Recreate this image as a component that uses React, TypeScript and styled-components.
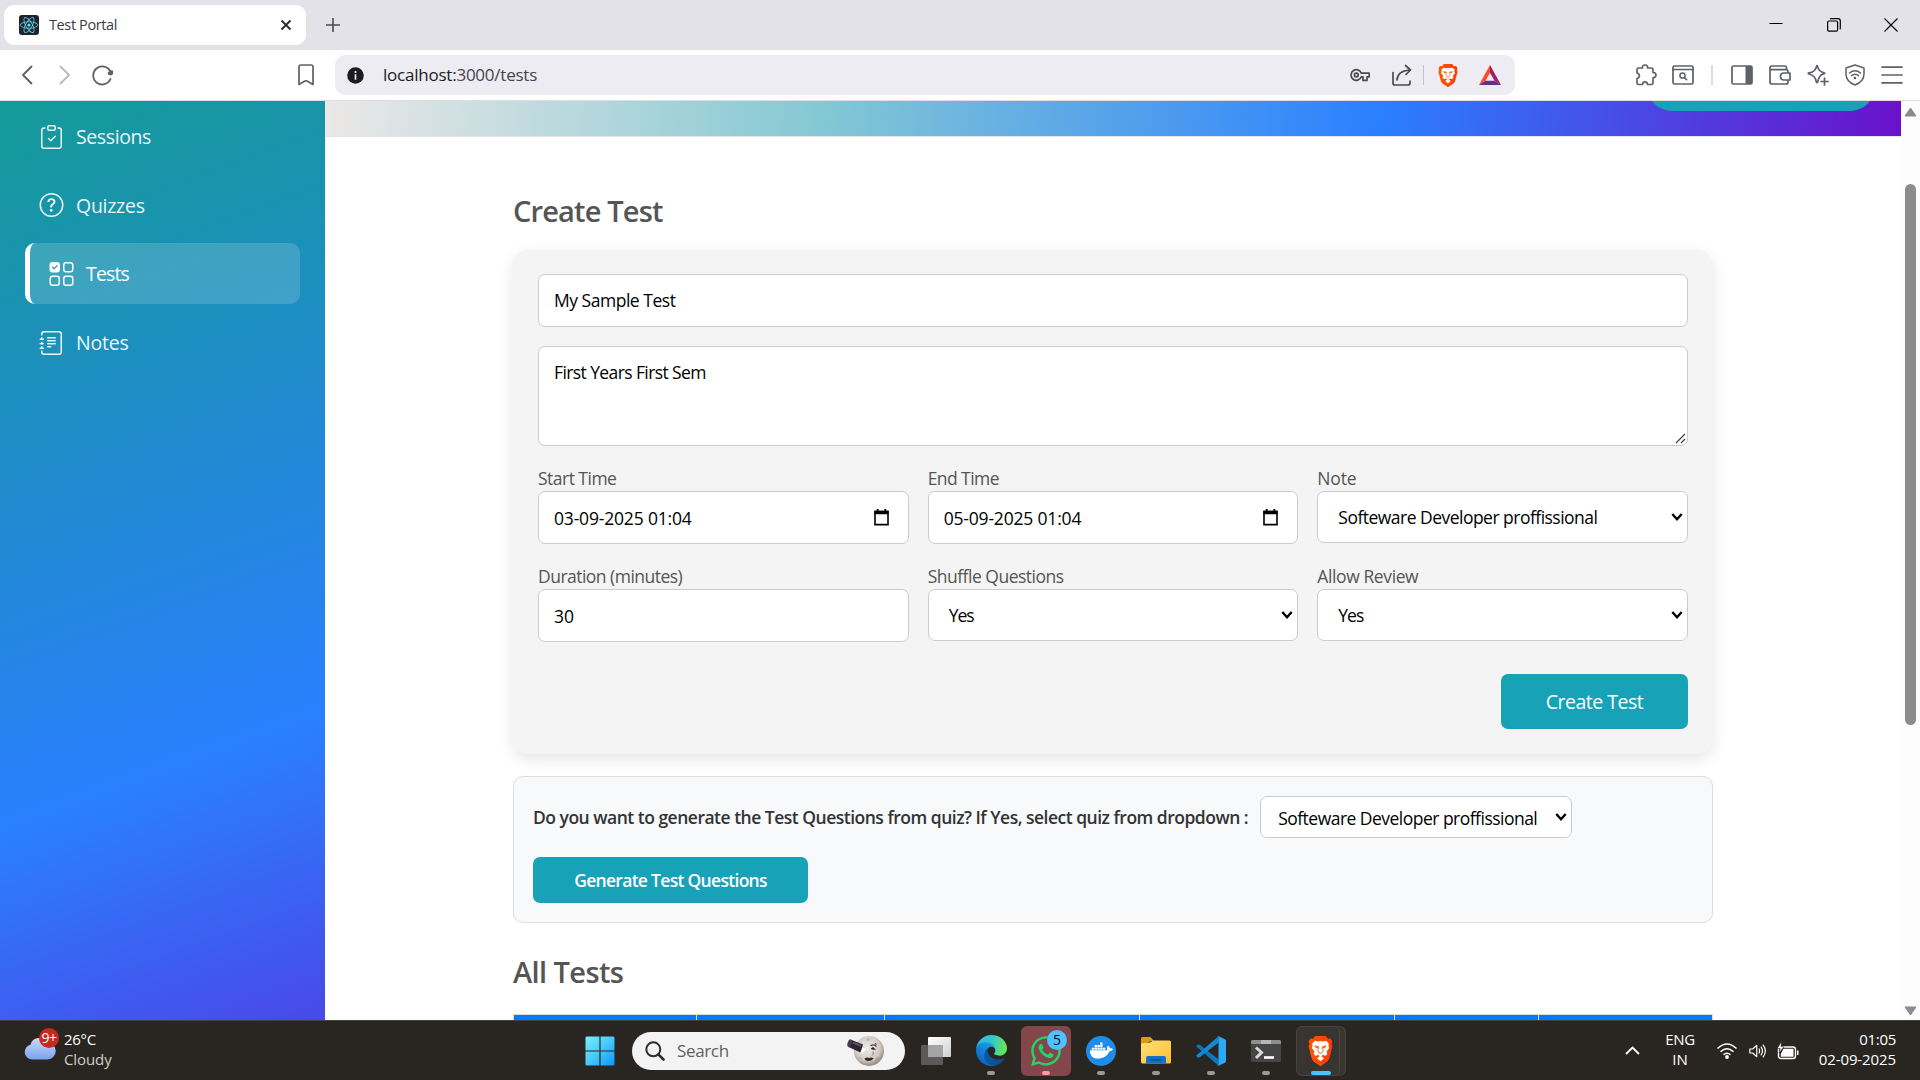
import React from "react";
import styled, { createGlobalStyle } from "styled-components";
import { BsClipboardCheck, BsQuestionCircle, BsUiChecksGrid, BsJournalText } from "react-icons/bs";
import { FaWhatsapp, FaDocker, FaReact } from "react-icons/fa";

const GlobalStyle = createGlobalStyle`
  * { box-sizing: border-box; }
  html, body { margin: 0; overflow: hidden; }
  body { font-family: "Open Sans", "Noto Sans", sans-serif; background: #fff; }
`;

const Screen = styled.div`
  width: 1920px;
  height: 1080px;
  display: flex;
  flex-direction: column;
  overflow: hidden;
`;

const Text = styled.span<{ $ls?: number }>`
  letter-spacing: ${(p) => p.$ls ?? 0}px;
  white-space: nowrap;
`;

/* ---------- browser chrome ---------- */

const TabStrip = styled.div`
  height: 50px;
  flex: none;
  display: flex;
  align-items: center;
  background: #e3e2e8;
  padding-left: 4px;
`;

const Tab = styled.div`
  width: 302px;
  height: 40px;
  border-radius: 10px;
  background: #fff;
  display: flex;
  align-items: center;
  padding: 0 14px 0 15px;
  color: #3b3c42;
  font-size: 14.5px;

  ${Text} { padding-bottom: 2px; }
`;

const Favicon = styled.div`
  width: 20px;
  height: 20px;
  border-radius: 3px;
  background: #20232a;
  color: #61dafb;
  font-size: 18px;
  display: grid;
  place-items: center;
  margin-right: 10px;
`;

const Push = styled.div`
  margin-left: auto;
  display: flex;
  align-items: center;
`;

const NewTab = styled.div`
  width: 53px;
  display: flex;
  justify-content: center;
`;

const WindowButton = styled.div`
  width: 57.5px;
  height: 50px;
  display: grid;
  place-items: center;
`;

const Toolbar = styled.div`
  height: 51px;
  flex: none;
  display: flex;
  align-items: center;
  background: #fff;
  border-bottom: 1px solid #dedde3;
`;

const Cell = styled.div<{ $w: number; $end?: boolean }>`
  width: ${(p) => p.$w}px;
  flex: none;
  display: flex;
  align-items: center;
  justify-content: ${(p) => (p.$end ? "flex-end" : "center")};
`;

const BookmarkCell = styled(Cell)`
  margin-left: 148px;
`;

const MenuCell = styled(Cell)`
  margin-right: 10px;
`;

const AddressBar = styled.div`
  width: 1180px;
  height: 40px;
  border-radius: 10px;
  background: #edecf2;
  display: flex;
  align-items: center;
  color: #44454b;
  font-size: 17px;
  padding-right: 6px;

  > ${Text} { padding: 0 0 2px 8px; }
  b { font-weight: 400; color: #1b1b20; }
`;

const Separator = styled.div<{ $w?: number }>`
  width: ${(p) => p.$w ?? 1}px;
  height: 20px;
  background: ${(p) => (p.$w ? "#dcdbe2" : "#c2c1c8")};
`;

/* ---------- page ---------- */

const Viewport = styled.div`
  height: 919px;
  flex: none;
  display: flex;
  overflow: hidden;
`;

const Sidebar = styled.nav`
  width: 325px;
  flex: none;
  padding: 5px 25px;
  background: linear-gradient(160deg, #159a98 0%, #1993af 18%, #2a7fff 71%, #4949e6 100%);
  color: #e9f6fa;
  font-size: 19.5px;
`;

const NavItem = styled.a<{ $active?: boolean }>`
  display: flex;
  align-items: center;
  gap: 12px;
  height: 61px;
  margin-bottom: 7.7px;
  padding-left: ${(p) => (p.$active ? 19 : 14)}px;
  border-radius: 10px;
  border-left: ${(p) => (p.$active ? "5px solid #fff" : "0")};
  background: ${(p) => (p.$active ? "rgba(255,255,255,.16)" : "transparent")};
  color: ${(p) => (p.$active ? "#fff" : "inherit")};

  svg { width: 25px; height: 24px; }
`;

const Main = styled.main`
  flex: 1;
  display: flex;
  flex-direction: column;
`;

const Banner = styled.header`
  height: 36px;
  flex: none;
  overflow: hidden;
  border-bottom: 1px solid #e6e4ea;
  background: linear-gradient(95deg, #ece8e7 0%, #84c8d3 31.5%, #2a7fff 67%, #4b46e3 84%, #6a11cb 100%);
  display: flex;
  justify-content: flex-end;
  align-items: flex-end;
  padding: 0 26px 25px 0;
`;

const BannerButton = styled.div`
  width: 228px;
  height: 50px;
  flex: none;
  border-radius: 25px;
  background: #17a2b8;
`;

const Content = styled.div`
  width: 1200px;
  margin-left: 188px;
`;

const Heading = styled.h2<{ $top: number; $bottom: number }>`
  margin: 0;
  padding: ${(p) => p.$top}px 0 ${(p) => p.$bottom}px;
  font-size: 29px;
  line-height: 40px;
  font-weight: 600;
  color: #555;
`;

const FormCard = styled.form`
  height: 504px;
  padding: 24px 25px;
  border-radius: 15px;
  background: #f4f4f4;
  box-shadow: 0 5px 15px rgba(0, 0, 0, 0.1);
  font-size: 17.5px;
`;

const Control = styled.div<{ $h: number; $indent?: number; $right?: number; $top?: boolean; $lift?: number }>`
  display: flex;
  justify-content: space-between;
  align-items: ${(p) => (p.$top ? "flex-start" : "center")};
  height: ${(p) => p.$h}px;
  padding: ${(p) => (p.$top ? "13px" : "0")} ${(p) => p.$right ?? 4}px ${(p) => p.$lift ?? 0}px ${(p) => p.$indent ?? 15}px;
  border: 1px solid #ccc;
  border-radius: 7px;
  background: #fff;
  color: #000;
  line-height: 24px;
`;

const TextArea = styled(Control)`
  margin: 19px 0 20px;
  position: relative;
`;

const ResizeGrip = styled.svg`
  position: absolute;
  right: 1px;
  bottom: 1px;
`;

const Fields = styled.div`
  display: grid;
  grid-template-columns: repeat(3, 1fr);
  column-gap: 19px;
  row-gap: 21px;
`;

const Field = styled.label`
  height: 77px;
  color: #555;
  line-height: 25px;

  > ${Text} { display: block; }
`;

const Actions = styled.div`
  display: flex;
  justify-content: flex-end;
  padding-top: 33px;
`;

const Button = styled.button<{ $w: number; $h: number; $size: number; $weight: number }>`
  width: ${(p) => p.$w}px;
  height: ${(p) => p.$h}px;
  padding: 0;
  border: 0;
  border-radius: 7px;
  background: #17a2b8;
  color: #fff;
  font-family: inherit;
  font-size: ${(p) => p.$size}px;
  font-weight: ${(p) => p.$weight};
`;

const GenerateCard = styled.section`
  height: 147px;
  margin-top: 22px;
  padding: 19px;
  border: 1px solid #ddd;
  border-radius: 10px;
  background: #f8f9fb;
  font-size: 17.5px;
`;

const Question = styled.div`
  display: flex;
  align-items: center;
  gap: 12px;
  margin-bottom: 19px;
  font-weight: 600;
  color: #333;

  ${Control} { width: 312px; font-weight: 400; }
  ${Control} ${Text} { padding-top: 1px; }
`;

const Table = styled.div`
  display: grid;
  grid-template-columns: 183px 188px 255px 255px 144px 1fr;
  height: 40px;
  border-top: 1px solid #ddd;
  border-left: 1px solid #ddd;
`;

const HeadCell = styled.div`
  background: #007bff;
  border-right: 1px solid #ddd;
`;

const ScrollTrack = styled.div`
  width: 19px;
  flex: none;
  display: flex;
  flex-direction: column;
  align-items: center;
  background: #fcfcfc;
  padding: 6px 1px 4px 0;
`;

const ScrollThumb = styled.div`
  width: 11px;
  height: 541px;
  margin: 67px 0 auto;
  border-radius: 6px;
  background: #8b8b8b;
`;

/* ---------- taskbar ---------- */

const Taskbar = styled.footer`
  height: 60px;
  flex: none;
  display: flex;
  align-items: center;
  background: #292520;
  border-top: 1px solid #45413c;
  color: #fff;
  font-size: 15px;
`;

const Weather = styled.div`
  width: 575px;
  display: flex;
  align-items: center;
  padding-left: 24px;
`;

const WeatherIcon = styled.div`
  position: relative;
  width: 40px;
  height: 60px;
  padding-top: 15px;
`;

const AlertBadge = styled.div`
  position: absolute;
  left: 15px;
  top: 7px;
  width: 20px;
  height: 20px;
  border-radius: 50%;
  background: #c42b1c;
  text-align: center;
  font-size: 14px;
  line-height: 19px;
  letter-spacing: -0.5px;
`;

const Stack = styled.div<{ $align?: string }>`
  display: flex;
  flex-direction: column;
  align-items: ${(p) => p.$align ?? "flex-start"};
  line-height: 20px;
  padding-bottom: 4px;
`;

const Muted = styled(Text)`
  color: #cfcdcb;
`;

const Apps = styled.div`
  display: flex;
  align-items: center;
  gap: 5px;
`;

const AppCell = styled.div<{ $bg?: string }>`
  position: relative;
  width: 50px;
  height: 50px;
  border-radius: 6px;
  background: ${(p) => p.$bg ?? "transparent"};
  display: flex;
  align-items: center;
  justify-content: center;
`;

const Indicator = styled.i<{ $c?: string; $w?: number }>`
  position: absolute;
  bottom: 1px;
  left: ${(p) => 25 - (p.$w ?? 8) / 2}px;
  width: ${(p) => p.$w ?? 8}px;
  height: 4px;
  border-radius: 2px;
  background: ${(p) => p.$c ?? "#9b9896"};
`;

const CountBadge = styled.div`
  position: absolute;
  right: 4px;
  top: 4px;
  width: 20px;
  height: 20px;
  border-radius: 50%;
  background: #4cc2ff;
  color: #111;
  font-size: 14px;
  line-height: 20px;
  text-align: center;
`;

const BraveCell = styled(AppCell)`
  width: 44px;
  padding-left: 5px;
  background: #383430;
  border: 1px solid #48443f;
  box-shadow: 5px 0 0 -0.5px #38342f, 6px 0 0 0 #45413c;
`;

const BraveIndicator = styled(Indicator)`
  left: 14px;
  bottom: 0;
`;

const SearchBox = styled.div`
  width: 273px;
  height: 38px;
  margin: 0 1px 0 2px;
  border-radius: 19px;
  background: #f3f3f3;
  display: flex;
  align-items: center;
  padding: 0 20px 0 13px;
  color: #5f5f5f;
  font-size: 17px;
`;

const SearchLabel = styled(Text)`
  margin: 0 auto 1px 12px;
`;

const DockerDisc = styled.div`
  width: 30px;
  height: 30px;
  border-radius: 50%;
  background: #1d8ceb;
  display: grid;
  place-items: center;
  font-size: 23px;
`;

const Tray = styled.div`
  margin-left: auto;
  padding-right: 24px;
  display: flex;
  align-items: center;
`;

/* ---------- drawings ---------- */

const stroke = { fill: "none", stroke: "#5f6168", strokeWidth: 1.7, strokeLinejoin: "round", strokeLinecap: "round" } as const;

const Chevron = () => (
  <svg width="12" height="10" viewBox="0 0 12 10"><path d="M1.3 2 6 7.2 10.7 2" fill="none" stroke="#000" strokeWidth="2.4" /></svg>
);

const Calendar = () => (
  <svg width="15" height="17" viewBox="0 0 15 17">
    <path d="M1 2.6h13v13H1z" fill="none" stroke="#000" strokeWidth="1.6" />
    <path d="M.4 1.8h14.2v3.400H.4zM2.8 0h1.8v3H2.8zM10.4 0h1.8v3h-1.8z" />
  </svg>
);

const BraveLion = ({ w, h }: { w: number; h: number }) => (
  <svg width={w} height={h} viewBox="0 0 24 28" preserveAspectRatio="none">
    <defs>
      <linearGradient id="lion" x1="0" x2="1"><stop stopColor="#ff5601" /><stop offset="1" stopColor="#ff3a08" /></linearGradient>
    </defs>
    <path d="M17 0 19.2 2.6 21.6 2.4 23.4 5 22.6 7.4 23.4 9.6 20.6 20.6Q20 22.6 18.2 24L12.8 27.7Q12 28.2 11.2 27.7L5.8 24Q4 22.6 3.4 20.6L.6 9.6 1.4 7.4.6 5 2.4 2.4 4.8 2.6 7 0z" fill="url(#lion)" />
    <path d="M4 7.2 6.5 4.5 9.8 5.2 12 4.6 14.2 5.2 17.5 4.5 20 7.2 19.6 9 20.4 11.2 17.8 14.4 18.6 16.4 16.8 18.6 14.4 17.6 12.9 19 15.4 20.8 12 23.6 8.6 20.8 11.1 19 9.6 17.6 7.2 18.6 5.4 16.4 6.2 14.4 3.6 11.2 4.4 9z" fill="#fff" />
    <path d="M6.4 9.200 10.200 9.900 10.400 11.400 9.400 13.200 10.600 15.600M17.600 9.200 13.800 9.900 13.600 11.400 14.600 13.200 13.400 15.600M10.600 15.600 12 16.300 13.400 15.600" fill="none" stroke="#ff4d04" strokeWidth=".8" />
    <path d="M6.200 9.400 9.600 10.300 9.200 11.600 7.600 11zM17.800 9.400 14.400 10.300 14.800 11.600 16.400 11z" fill="#ff4d04" />
  </svg>
);

const WindowsLogo = () => (
  <svg width="30" height="30" viewBox="0 0 30 30">
    <defs>
      <linearGradient id="win" x1="0" y1="0" x2="30" y2="30" gradientUnits="userSpaceOnUse">
        <stop stopColor="#7cf3ff" /><stop offset=".5" stopColor="#46c8fb" /><stop offset="1" stopColor="#0a93fb" />
      </linearGradient>
    </defs>
    <path d="M1.5.5H14.4V14.4H.5V1.5zM15.6.5H28.5l1 1V14.4H15.6zM.5 15.6H14.4V29.5H1.5l-1-1zM15.6 15.6H29.5V28.5l-1 1H15.6z" fill="url(#win)" />
  </svg>
);

const Edge = () => (
  <svg width="31" height="31" viewBox="0 0 256 256">
    <defs>
      <linearGradient id="e1" x1="60" y1="177" x2="236" y2="177" gradientUnits="userSpaceOnUse"><stop stopColor="#0c59a4" /><stop offset="1" stopColor="#114a8b" /></linearGradient>
      <linearGradient id="e2" x1="150" y1="90" x2="45" y2="220" gradientUnits="userSpaceOnUse"><stop stopColor="#1b9de2" /><stop offset=".5" stopColor="#0f85d8" /><stop offset="1" stopColor="#0669c4" /></linearGradient>
      <linearGradient id="e3" x1="10" y1="60" x2="250" y2="110" gradientUnits="userSpaceOnUse"><stop stopColor="#2fb5e8" /><stop offset=".5" stopColor="#36c6c9" /><stop offset="1" stopColor="#66eb4f" /></linearGradient>
    </defs>
    <path d="M231 190.500c-3.400 1.800-6.900 3.400-10.500 4.700a101 101 0 0 1-35.900 6.500c-47.300 0-88.500-32.500-88.500-74.300a31.500 31.500 0 0 1 16.400-27.300c-42.800 1.800-53.800 46.400-53.800 72.500 0 73.900 68.100 81.400 82.800 81.400 7.900 0 19.800-2.300 27-4.600l1.300-.4a128 128 0 0 0 66.600-52.800 4 4 0 0 0-5.400-5.700z" fill="url(#e1)" />
    <path d="M105.700 241.400a79 79 0 0 1-22.700-21.300 80.700 80.700 0 0 1 29.500-120c3.200-1.500 8.500-4.100 15.600-4a32.400 32.400 0 0 1 25.700 13 31.900 31.900 0 0 1 6.300 18.700c0-.2 24.500-79.600-80-79.600-43.900 0-80 41.700-80 78.200a130 130 0 0 0 12.100 56 128 128 0 0 0 156.400 67 75.500 75.500 0 0 1-62.800-8z" fill="url(#e2)" />
    <path d="M152.300 148.900c-.9 1-3.400 2.500-3.400 5.600 0 2.600 1.700 5.200 4.800 7.300 14.300 10 41.400 8.600 41.500 8.600a59.600 59.600 0 0 0 30.300-8.300 61.400 61.400 0 0 0 30.400-52.900c.3-22.400-8-37.300-11.300-43.900C223.500 23.900 177.700 0 128 0A128 128 0 0 0 0 126.200c.5-36.500 36.800-66 80-66 3.500 0 23.500.3 42 10a72.600 72.600 0 0 1 30.900 29.300c6.100 10.600 7.200 24.100 7.200 29.500s-2.700 13.300-7.800 19.900z" fill="url(#e3)" />
  </svg>
);

const Folder = () => (
  <svg width="30" height="27" viewBox="0 0 30 27">
    <defs><linearGradient id="fo" x1="0" y1="0" x2="1" y2="1"><stop stopColor="#ffe27a" /><stop offset="1" stopColor="#fdbd2c" /></linearGradient></defs>
    <path d="M0 1.500Q0 0 1.500 0h8l3.500 4h-3L0 9z" fill="#dc9c12" />
    <path d="M0 6.500 9 5.500l3-2h16.500Q30 3.500 30 5v20.500q0 1-1.500 1h-27Q0 26.500 0 25z" fill="url(#fo)" />
    <path d="M5 26.500V21q0-2 2-2h16q2 0 2 2v5.500z" fill="#1173c7" />
    <path d="M9.500 22.800h11" stroke="#0b4f91" strokeWidth="1.500" />
  </svg>
);

const VSCode = () => (
  <svg width="30" height="30" viewBox="0 0 30 30">
    <path d="M0 10.300 2 8.600Q2.600 8.200 3.300 8.600L22.500 23.300V29.700z" fill="#0b76bd" />
    <path d="M0 19.700 2 21.400q.6.400 1.300 0L22.500 6.700V.300z" fill="#1686cf" />
    <path d="M21 .500Q21.600 0 22.500.300L29 3.200q1 .500 1 1.500v20.600q0 1-1 1.500l-6.500 2.900Q21.600 30 21 29.500q1.500.500 1.500-1.500V2q0-2-1.500-1.500z" fill="#2aaaf2" />
  </svg>
);

const Terminal = () => (
  <svg width="30" height="22" viewBox="0 0 30 22">
    <rect width="30" height="22" rx="1.500" fill="#454545" />
    <path d="M0 4V1.500Q0 0 1.500 0h27Q30 0 30 1.500V4z" fill="#8e8e8e" />
    <path d="M10 0h10v4H10z" fill="#b5b5b5" />
    <path d="m5 7.500 5.500 5L5 18" fill="none" stroke="#d9d9d9" strokeWidth="3" />
    <path d="M13 17.500h10" stroke="#fff" strokeWidth="2.600" />
  </svg>
);

const Moon = () => (
  <svg width="38" height="32" viewBox="0 0 38 32">
    <defs><radialGradient id="mo" cx=".45" cy=".4" r=".6"><stop stopColor="#efede9" /><stop offset=".7" stopColor="#cfcac3" /><stop offset="1" stopColor="#91877c" /></radialGradient></defs>
    <circle cx="22" cy="16" r="15" fill="url(#mo)" />
    <circle cx="21" cy="4.500" r="1.600" fill="#bdb7af" /><circle cx="13" cy="24" r="2" fill="#bdb7af" /><circle cx="30" cy="24" r="1.600" fill="#aaa299" />
    <path d="M9 10.500 19 14 14 19z" fill="#fff" />
    <path d="M3.500 4.500 16 9.500 13.500 17.500 1.500 12z" fill="#2c2430" />
    <ellipse cx="2.600" cy="8.200" rx="2" ry="4" transform="rotate(18 2.600 8.200)" fill="#4a3d4c" />
    <path d="M6 7.500 14 11" stroke="#6b5b68" strokeWidth="1.400" />
    <path d="M23.500 11q3-2.500 6 .5M24 14q2.500-1.500 4.500 1M28 8.500l1.500 1" fill="none" stroke="#4b4140" strokeWidth="1.200" />
    <circle cx="26" cy="13.500" r="1.200" fill="#2b2426" />
    <path d="M17.500 23.500q3-1.500 4.500-.5 2-1 4.500 0-1.500 3-5 3t-4-2.500z" fill="#3d2428" />
    <path d="M26 16.500q1 3-1 4" fill="none" stroke="#8a7f76" />
  </svg>
);

export default function App() {
  return (
    <Screen>
      <GlobalStyle />
      <TabStrip>
        <Tab>
          <Favicon><FaReact /></Favicon>
          <Text $ls={-0.38}>Test Portal</Text>
          <Push><svg width="12" height="12" viewBox="0 0 12 12"><path d="m1.500 1.500 9 9m0-9-9 9" stroke="#2b2c31" strokeWidth="1.900" /></svg></Push>
        </Tab>
        <NewTab><svg width="14" height="14" viewBox="0 0 14 14"><path d="M7 0v14M0 7h14" stroke="#4a4b51" strokeWidth="1.600" /></svg></NewTab>
        <Push>
          <WindowButton><svg width="14" height="16"><path d="M.5 6.500h13" stroke="#000" /></svg></WindowButton>
          <WindowButton>
            <svg width="14" height="14" viewBox="0 0 14 14"><rect x=".6" y="3" width="10" height="10.200" rx="1.500" fill="none" stroke="#000" strokeWidth="1.200" /><path d="M3 1Q3.500.600 4.500.600H11Q13.300.600 13.300 3v7q0 .8-.5 1.200" fill="none" stroke="#000" strokeWidth="1.200" /></svg>
          </WindowButton>
          <WindowButton><svg width="14" height="14"><path d="m.5.5 13 13m0-13-13 13" stroke="#000" strokeWidth="1.100" /></svg></WindowButton>
        </Push>
      </TabStrip>

      <Toolbar>
        <Cell $w={54}><svg width="12" height="20" viewBox="0 0 12 20"><path d="m10.500 1.500-8.500 8.500 8.500 8.500" {...stroke} strokeWidth="1.900" /></svg></Cell>
        <Cell $w={22}><svg width="12" height="20" viewBox="0 0 12 20"><path d="m1.500 1.500 8.500 8.500-8.500 8.500" {...stroke} stroke="#b9babf" strokeWidth="1.900" /></svg></Cell>
        <Cell $w={53}><svg width="22" height="21" viewBox="0 0 22 21"><path d="M18.300 6.500A9 9 0 1 0 18.500 14" {...stroke} strokeWidth="1.800" /><path d="M18.500 5.200 21 5.500v3.800l-2 1.200-2.800-.8-.6-2z" fill="#5f6168" /></svg></Cell>
        <BookmarkCell $w={58}>
          <svg width="16" height="22" viewBox="0 0 16 22"><path d="M1 3q0-2 2-2h10q2 0 2 2v17.500L9 17.100Q8 16.500 7 17.100L1 20.500z" {...stroke} /></svg>
        </BookmarkCell>
        <AddressBar>
          <Cell $w={40}>
            <svg width="17" height="17" viewBox="0 0 17 17"><circle cx="8.500" cy="8.500" r="8.300" fill="#1b1b20" /><path d="M8.500 7.300v5.500M8.500 4v1.900" stroke="#edecf2" strokeWidth="1.700" /></svg>
          </Cell>
          <Text $ls={-0.23}><b>localhost:</b>3000/tests</Text>
          <Push>
            <Cell $w={40}><svg width="20" height="14" viewBox="0 0 20 14"><path d="M11.300 5.200A5.300 5.300 0 1 0 11.300 8.800H13v3.600h4V8.800h2.200V5.200z" {...stroke} stroke="#4a4b51" /><circle cx="6.300" cy="7" r="1.900" {...stroke} stroke="#4a4b51" /></svg></Cell>
            <Cell $w={43}><svg width="20" height="22" viewBox="0 0 20 22"><path d="M1 8.500V19q0 2 2 2h13q2 0 2-2v-2M5 16Q5.500 7 17.500 6M13.500 1.500l5 4.500-4.500 4.500" {...stroke} stroke="#4a4b51" /></svg></Cell>
            <Separator />
            <Cell $w={47}><BraveLion w={20} h={23} /></Cell>
            <Cell $w={38}>
              <svg width="22" height="20" viewBox="0 0 22 20"><path d="M11 0 0 20 6.500 15.700 11 7.800z" fill="#ff4724" /><path d="M11 0 22 20 15.500 15.700 11 7.800z" fill="#9e1f63" /><path d="M0 20h22l-6.500-4.300h-9z" fill="#662d91" /></svg>
            </Cell>
          </Push>
        </AddressBar>
        <Push>
          <Cell $w={37}><svg width="22" height="22" viewBox="0 0 22 22"><path d="M2 5.500Q2 4 3.500 4h4q-.5-3 2.500-3t2.500 3h4Q18 4 18 5.500v3q3 0 3 2.600t-3 2.700v5q0 1.700-1.500 1.700h-4q-.3-2.700-2.500-2.700T7.500 20.500h-4Q2 20.500 2 19v-4.500q2.400-.7 2.400-2.800T2 9z" {...stroke} /></svg></Cell>
          <Cell $w={37}><svg width="22" height="20" viewBox="0 0 22 20"><rect x="1" y="1" width="20" height="18" rx="1.500" {...stroke} /><path d="M1 4.500h20" {...stroke} /><circle cx="10.500" cy="10.500" r="2.600" {...stroke} strokeWidth="1.500" /><path d="m12.500 12.500 2 2.200" {...stroke} /></svg></Cell>
          <Cell $w={22}><Separator $w={2} /></Cell>
          <Cell $w={37}><svg width="22" height="20" viewBox="0 0 22 20"><rect x="1" y="1" width="20" height="18" rx="1.500" {...stroke} /><path d="M14.500 1H21v18h-6.500z" fill="#5f6168" /></svg></Cell>
          <Cell $w={39}><svg width="22" height="20" viewBox="0 0 22 20"><path d="M1 3v14q0 2 2 2h14q2 0 2-2v-2M1 3q0-2 2-2h13q1.500 0 1.500 1.500V4M1 3q0 1.700 2 1.700h14q2 0 2 2V8M21 8h-6q-3.500 0-3.500 3.500T15 15h6z" {...stroke} /></svg></Cell>
          <Cell $w={37}><svg width="22" height="22" viewBox="0 0 22 22"><path d="M10 1.500q.3 0 .5.800 1 5 6.500 6.400 1.500.5 0 1-3.500.8-4.800 3.800-.9 1.700-1.500 4.500-.7 1.500-1.400 0-.8-6.500-7.300-8-1.500-.6 0-1.100 6.500-1.100 7.500-6.600.2-.8.500-.8zM17.500 14v7M14 17.500h7" {...stroke} /></svg></Cell>
          <Cell $w={38}><svg width="20" height="22" viewBox="0 0 20 22"><path d="M10 1 19 4v6q0 7.500-9 11-9-3.500-9-11V4z" {...stroke} strokeWidth="1.500" /><path d="M4.500 9q5.500-4.500 11 0M6.500 11.600q3.500-2.700 7 0" {...stroke} strokeWidth="1.500" /><circle cx="10" cy="14" r="1.300" fill="#5f6168" /></svg></Cell>
          <MenuCell $w={36}><svg width="22" height="18" viewBox="0 0 22 18"><path d="M1 1.200h20M1 9h20M1 16.800h20" {...stroke} /></svg></MenuCell>
        </Push>
      </Toolbar>

      <Viewport>
        <Sidebar>
          <NavItem><BsClipboardCheck /><Text $ls={-0.39}>Sessions</Text></NavItem>
          <NavItem><BsQuestionCircle /><Text $ls={-0.27}>Quizzes</Text></NavItem>
          <NavItem $active><BsUiChecksGrid /><Text $ls={-0.84}>Tests</Text></NavItem>
          <NavItem><BsJournalText /><Text $ls={-0.22}>Notes</Text></NavItem>
        </Sidebar>
        <Main>
          <Banner><BannerButton /></Banner>
          <Content>
            <Heading $top={54} $bottom={19}><Text $ls={-0.84}>Create Test</Text></Heading>
            <FormCard>
              <Control $h={53} $lift={2}><Text $ls={-0.48}>My Sample Test</Text></Control>
              <TextArea $h={100} $top>
                <Text $ls={-0.6}>First Years First Sem</Text>
                <ResizeGrip width="11" height="11" viewBox="0 0 11 11"><path d="M1 10 10 1M6 10l4-4" stroke="#444" strokeWidth="1.300" /></ResizeGrip>
              </TextArea>
              <Fields>
                <Field><Text $ls={-0.52}>Start Time</Text><Control $h={53} $right={19}><Text $ls={-0.18}>03-09-2025 01:04</Text><Calendar /></Control></Field>
                <Field><Text $ls={-0.57}>End Time</Text><Control $h={53} $right={19}><Text $ls={-0.18}>05-09-2025 01:04</Text><Calendar /></Control></Field>
                <Field><Text $ls={-0.2}>Note</Text><Control $h={52} $indent={20}><Text $ls={-0.52}>Softeware Developer proffissional</Text><Chevron /></Control></Field>
                <Field><Text $ls={-0.52}>Duration (minutes)</Text><Control $h={53}><Text>30</Text></Control></Field>
                <Field><Text $ls={-0.5}>Shuffle Questions</Text><Control $h={52} $indent={20}><Text $ls={-1}>Yes</Text><Chevron /></Control></Field>
                <Field><Text $ls={-0.4}>Allow Review</Text><Control $h={52} $indent={20}><Text $ls={-1}>Yes</Text><Chevron /></Control></Field>
              </Fields>
              <Actions><Button type="button" $w={187} $h={55} $size={19.5} $weight={400}><Text $ls={-0.5}>Create Test</Text></Button></Actions>
            </FormCard>
            <GenerateCard>
              <Question>
                <Text $ls={-0.5}>Do you want to generate the Test Questions from quiz? If Yes, select quiz from dropdown :</Text>
                <Control $h={42} $indent={17}><Text $ls={-0.52}>Softeware Developer proffissional</Text><Chevron /></Control>
              </Question>
              <Button type="button" $w={275} $h={46} $size={17.5} $weight={600}><Text $ls={-0.7}>Generate Test Questions</Text></Button>
            </GenerateCard>
            <Heading $top={29} $bottom={22}><Text $ls={-0.59}>All Tests</Text></Heading>
            <Table><HeadCell /><HeadCell /><HeadCell /><HeadCell /><HeadCell /><HeadCell /></Table>
          </Content>
        </Main>
        <ScrollTrack>
          <svg width="13" height="10" viewBox="0 0 13 10"><path d="M6.500 1 12 9H1z" fill="#8b8b8b" stroke="#8b8b8b" strokeLinejoin="round" /></svg>
          <ScrollThumb />
          <svg width="13" height="10" viewBox="0 0 13 10"><path d="M6.500 9 12 1H1z" fill="#8b8b8b" stroke="#8b8b8b" strokeLinejoin="round" /></svg>
        </ScrollTrack>
      </Viewport>

      <Taskbar>
        <Weather>
          <WeatherIcon>
            <svg width="32" height="24" viewBox="0 0 32 24">
              <defs><linearGradient id="cl" x1="0" y1="0" x2="0" y2="1"><stop stopColor="#c9dcff" /><stop offset="1" stopColor="#7ba2ec" /></linearGradient></defs>
              <path d="M8 23.500a7.500 7.500 0 0 1-1.500-14.800A9 9 0 0 1 23 6.500 8.500 8.500 0 0 1 23.500 23.500z" fill="url(#cl)" />
            </svg>
            <AlertBadge>9+</AlertBadge>
          </WeatherIcon>
          <Stack><Text $ls={-0.3}>26°C</Text><Muted $ls={-0.1}>Cloudy</Muted></Stack>
        </Weather>
        <Apps>
          <AppCell><WindowsLogo /></AppCell>
          <SearchBox>
            <svg width="20" height="20" viewBox="0 0 20 20"><circle cx="8.300" cy="8.300" r="7" fill="none" stroke="#2b2b2b" strokeWidth="2" /><path d="m13.300 13.300 5.200 5.200" stroke="#2b2b2b" strokeWidth="2.600" strokeLinecap="round" /></svg>
            <SearchLabel $ls={-0.35}>Search</SearchLabel>
            <Moon />
          </SearchBox>
          <AppCell>
            <svg width="30" height="28" viewBox="0 0 30 28">
              <defs><linearGradient id="tv" x1="0" y1="0" x2="1" y2="1"><stop stopColor="#fff" /><stop offset="1" stopColor="#cfcfcf" /></linearGradient></defs>
              <rect x="7" width="23" height="20" rx="1" fill="url(#tv)" /><rect y="8" width="22" height="20" rx="1" fill="#5c5a58" /><path d="M7 8h15v12H7z" fill="#a5a4a3" />
            </svg>
          </AppCell>
          <AppCell><Edge /><Indicator /></AppCell>
          <AppCell $bg="#83464b"><FaWhatsapp size={34} color="#25d366" /><CountBadge>5</CountBadge><Indicator $c="#ff99a4" /></AppCell>
          <AppCell><DockerDisc><FaDocker /></DockerDisc><Indicator /></AppCell>
          <AppCell><Folder /><Indicator /></AppCell>
          <AppCell><VSCode /><Indicator /></AppCell>
          <AppCell><Terminal /><Indicator /></AppCell>
          <BraveCell><BraveLion w={25} h={30} /><BraveIndicator $c="#4cc2ff" $w={20} /></BraveCell>
        </Apps>
        <Tray>
          <Cell $w={46}><svg width="15" height="9" viewBox="0 0 15 9"><path d="m1 8 6.500-6.500L14 8" fill="none" stroke="#fff" strokeWidth="1.800" /></svg></Cell>
          <Cell $w={50}><Stack $align="center"><Text $ls={-0.28}>ENG</Text><Text>IN</Text></Stack></Cell>
          <Cell $w={44}>
            <svg width="22" height="18" viewBox="0 0 22 18"><path d="M1.500 6.500q9.500-9 19 0M4.500 9.700q6.500-6 13 0M7.500 12.700q3.500-3 7 0" fill="none" stroke="#fff" strokeWidth="1.500" /><circle cx="11" cy="15" r="1.900" fill="#fff" /></svg>
          </Cell>
          <Cell $w={18}>
            <svg width="22" height="18" viewBox="0 0 22 18"><path d="M1 6.500h3.500L9.500 2v14l-5-4.500H1zM12 6q2 3 0 6M14.500 3.700q4 5.300 0 10.600M17 1.200q6 7.800 0 15.600" fill="none" stroke="#fff" strokeWidth="1.400" strokeLinejoin="round" /></svg>
          </Cell>
          <Cell $w={42}>
            <svg width="22" height="18" viewBox="0 0 22 18"><rect x="1.500" y="5" width="17" height="11.500" rx="2.500" fill="none" stroke="#fff" strokeWidth="1.400" /><path d="M6.500 6.800h10v7.900H3.800v-3zM20 8.500h1.500v4.500H20z" fill="#fff" /><path d="M4.500-.5.200 6.500h3L2 11l5-6.300H4z" fill="#fff" stroke="#292520" strokeWidth=".6" /></svg>
          </Cell>
          <Cell $w={87} $end><Stack $align="flex-end"><Text $ls={-0.3}>01:05</Text><Text $ls={-0.1}>02-09-2025</Text></Stack></Cell>
        </Tray>
      </Taskbar>
    </Screen>
  );
}
